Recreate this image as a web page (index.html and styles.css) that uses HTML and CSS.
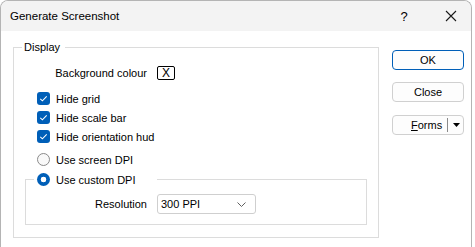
FILE: index.html
```html
<!DOCTYPE html>
<html lang="en">
<head>
    <meta charset="UTF-8">
    <meta name="viewport" content="width=device-width, initial-scale=1.0">
    <title>Generate Screenshot</title>

    <link rel="stylesheet" href="styles.css">
</head>
<body>
    <div class="window">
        <div class="titlebar">
            <span class="title">Generate Screenshot</span>
            <span class="help">?</span>
            <span class="close">
                <svg width="12" height="12" viewBox="0 0 12 12">
                    <path d="M1 1 L11 11 M11 1 L1 11" stroke="#1a1a1a" stroke-width="1.1" fill="none"/>
                </svg>
            </span>
        </div>

        <div class="content">
            <fieldset class="group">
                <legend class="group-title">Display</legend>

                <div class="row bg-row">
                    <span class="field-label">Background colour</span>
                    <button type="button" class="colour-btn">X</button>
                </div>

                <label class="row check-row first-check">
                    <span class="checkbox">
                        <svg width="13" height="13" viewBox="0 0 13 13"><path d="M3.3 6.8 L5.4 8.8 L9.7 4.4" stroke="#fff" stroke-width="1.1" fill="none"/></svg>
                    </span>
                    Hide grid
                </label>
                <label class="row check-row">
                    <span class="checkbox">
                        <svg width="13" height="13" viewBox="0 0 13 13"><path d="M3.3 6.8 L5.4 8.8 L9.7 4.4" stroke="#fff" stroke-width="1.1" fill="none"/></svg>
                    </span>
                    Hide scale bar
                </label>
                <label class="row check-row">
                    <span class="checkbox">
                        <svg width="13" height="13" viewBox="0 0 13 13"><path d="M3.3 6.8 L5.4 8.8 L9.7 4.4" stroke="#fff" stroke-width="1.1" fill="none"/></svg>
                    </span>
                    Hide orientation hud
                </label>

                <label class="row radio-row">
                    <span class="radio"></span>
                    Use screen DPI
                </label>

                <fieldset class="subgroup">
                    <legend class="subgroup-title">
                        <span class="radio checked"></span>
                        Use custom DPI
                    </legend>
                    <div class="row res-row">
                        <span class="field-label">Resolution</span>
                        <div class="select">
                            <span>300 PPI</span>
                            <svg width="9" height="5" viewBox="0 0 9 5"><path d="M0.5 0.5 L4.5 4.5 L8.5 0.5" stroke="#606060" stroke-width="1" fill="none"/></svg>
                        </div>
                    </div>
                </fieldset>
            </fieldset>

            <div class="buttons">
                <button type="button" class="btn btn-default">OK</button>
                <button type="button" class="btn">Close</button>
                <div class="btn split-btn">
                    <span class="split-label"><u>F</u>orms</span>
                    <span class="split-divider"></span>
                    <svg width="7" height="4" viewBox="0 0 7 4"><path d="M0 0 L7 0 L3.5 4 Z" fill="#000"/></svg>
                </div>
            </div>
        </div>
    </div>
</body>
</html>
```

FILE: styles.css
```css
* {
    margin: 0;
    padding: 0;
    box-sizing: border-box;
}

body {
    font-family: "Liberation Sans", Arial, sans-serif;
    font-size: 11px;
    color: #000;
    background: #fff;
    overflow: hidden;
}

.window {
    width: 472px;
    height: 247px;
    border: 1px solid #b4b4b4;
    border-bottom: none;
    border-radius: 8px 8px 0 0;
    overflow: hidden;
    background: #fff;
}

/* title bar */
.titlebar {
    height: 30px;
    background: #f3f3f3;
    display: flex;
    align-items: center;
    padding-left: 9px;
}

.title {
    flex: 1;
    font-size: 11.5px;
}

.help {
    width: 20px;
    margin-right: 31px;
    text-align: center;
    font-size: 13px;
}

.close {
    display: flex;
    width: 12px;
    height: 12px;
    margin-right: 14px;
}

/* body */
.content {
    display: flex;
    align-items: flex-start;
    padding: 8px 0 0 12px;
}

.group {
    width: 366px;
    border: 1px solid #dcdcdc;
    min-width: 0;
    padding: 8px 0 12px 0;
    display: flex;
    flex-direction: column;
}

.group-title {
    margin-left: 8px;
    padding: 0 5px 0 2px;
    line-height: 16px;
}

.row {
    display: flex;
    align-items: center;
    height: 19px;
}

.field-label {
    width: 133px;
    text-align: right;
    margin-right: 10px;
}

.colour-btn {
    width: 18px;
    height: 14px;
    border: 1px solid #000;
    border-radius: 2px;
    background: #fff;
    font-family: inherit;
    font-size: 12px;
    line-height: 12px;
    color: #000;
}

.check-row, .radio-row {
    padding-left: 23px;
    gap: 6px;
}

.first-check {
    margin-top: 7px;
}

.checkbox {
    display: flex;
    width: 13px;
    height: 13px;
    border-radius: 3px;
    background: #005fb8;
}

.radio {
    display: inline-block;
    width: 13px;
    height: 13px;
    border-radius: 50%;
    border: 1px solid #8a8a8a;
    background: #f9f9f9;
}

.radio.checked {
    border: none;
    background: radial-gradient(circle, #fff 0 2.6px, #005fb8 3.1px);
}

.radio-row {
    margin-top: 4px;
}

.subgroup {
    margin: 1px 11px 0 11px;
    border: 1px solid #dcdcdc;
    min-width: 0;
    padding: 5px 0 10px 0;
}

.subgroup-title {
    display: flex;
    align-items: center;
    gap: 6px;
    height: 19px;
    margin-left: 8px;
    padding: 0 22px 0 3px;
}

.res-row {
    height: 20px;
    margin-left: -12px;
}

.select {
    width: 99px;
    height: 20px;
    border: 1px solid #cfcfcf;
    border-radius: 3px;
    display: flex;
    align-items: center;
    justify-content: space-between;
    padding: 0 9px 0 3px;
}

.select svg {
    display: block;
}

/* buttons */
.buttons {
    margin: 11px 0 0 13px;
    display: flex;
    flex-direction: column;
}

.btn {
    width: 72px;
    height: 20px;
    border: 1px solid #d0d0d0;
    border-radius: 4px;
    background: #fdfdfd;
    font-family: inherit;
    font-size: 11px;
    color: #000;
    margin-bottom: 12px;
}

.btn-default {
    border-color: #005fb8;
}

.split-btn {
    display: flex;
    align-items: center;
    margin-top: 1px;
    padding-left: 18px;
}

.split-label {
    flex: none;
}

.split-divider {
    width: 1px;
    height: 14px;
    background: #8a8a8a;
    margin: 0 5px 0 5px;
}
```
